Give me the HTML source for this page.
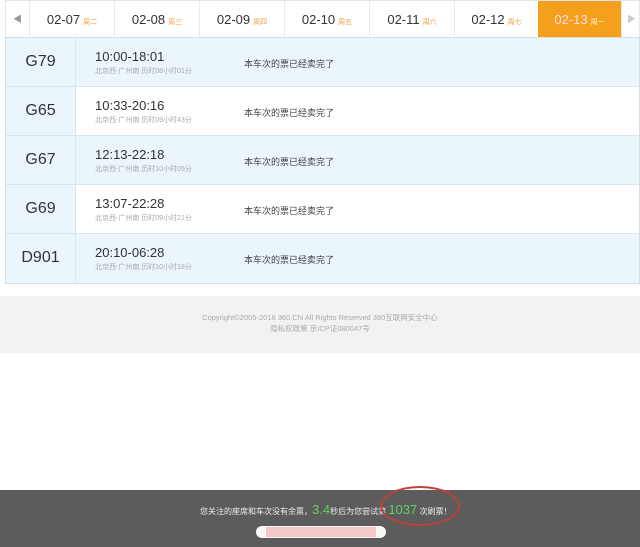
<!DOCTYPE html>
<html><head><meta charset="utf-8"><style>
*{margin:0;padding:0;box-sizing:border-box}
body{width:640px;height:547px;background:#fff;position:relative;overflow:hidden;font-family:"Liberation Sans","Noto Sans CJK SC",sans-serif}
.tabs{position:absolute;left:5px;top:0;width:635px;height:37px;border:1px solid #e3e6ea;border-bottom:none;background:#fff}
.tab{position:absolute;top:0;height:37px;border-left:1px solid #e8eaee;line-height:37px;text-align:center;font-size:13px;color:#333}
.tab small{font-size:7px;color:#f0a040;margin-left:3px}
.tab.on{background:#f5a01a;color:#fde;border:none}
.tab.on small{color:#ffd}
.tbl{position:absolute;left:5px;top:37px;width:635px;height:247px;border:1px solid #d5dde5}
.row{position:absolute;left:0;width:100%;height:49px;border-bottom:1px solid #d8e4ee}
.row.b{background:#eaf5fc}
.row .no{position:absolute;left:0;top:0;width:70px;height:48px;background:#eaf5fc;border-right:1px solid #d8e4ee;text-align:center;line-height:48px;font-size:16px;color:#333}
.row .t{position:absolute;left:89px;top:11px;font-size:13px;color:#333}
.row .s{position:absolute;left:89px;top:28px;font-size:7px;color:#aaa}
.row .m{position:absolute;left:238px;top:19px;font-size:9px;color:#444}
.foot{position:absolute;left:0;top:296px;width:640px;height:57px;background:#f1f2f4;text-align:center;font-size:7.5px;color:#aaa;padding-top:16px;line-height:11px}
.bar{position:absolute;left:0;top:490px;width:640px;height:57px;background:#5c5c5c}
.msg{position:absolute;left:200px;top:12px;font-size:8px;color:#eee;white-space:nowrap}
.msg b{font-weight:normal;color:#5fd35f;font-size:13px}
.ell{position:absolute;left:380px;top:-4px;width:80px;height:40px;border:2px solid #c0403a;border-radius:50%}
.pill{position:absolute;left:256px;top:36px;width:130px;height:12px;background:#f8f8f8;border-radius:6px}
.pill i{position:absolute;left:10px;top:1px;width:110px;height:10px;background:#f3c8c8}
</style></head><body>
<div class="tabs">
<div class="tab" style="left:0;width:23px;border:none;color:#999;font-size:9px">◀</div>
<div class="tab" style="left:23px;width:85px">02-07<small>周二</small></div>
<div class="tab" style="left:108px;width:85px">02-08<small>周三</small></div>
<div class="tab" style="left:193px;width:85px">02-09<small>周四</small></div>
<div class="tab" style="left:278px;width:85px">02-10<small>周五</small></div>
<div class="tab" style="left:363px;width:85px">02-11<small>周六</small></div>
<div class="tab" style="left:448px;width:84px">02-12<small>周七</small></div>
<div class="tab on" style="left:532px;width:83px">02-13<small>周一</small></div>
<div class="tab" style="left:615px;width:20px;color:#ccc;font-size:9px">▶</div>
</div>
<div class="tbl">
<div class="row b" style="top:0"><div class="no">G79</div><div class="t">10:00-18:01</div><div class="s">北京西-广州南 历时08小时01分</div><div class="m">本车次的票已经卖完了</div></div>
<div class="row" style="top:49px"><div class="no">G65</div><div class="t">10:33-20:16</div><div class="s">北京西-广州南 历时09小时43分</div><div class="m">本车次的票已经卖完了</div></div>
<div class="row b" style="top:98px"><div class="no">G67</div><div class="t">12:13-22:18</div><div class="s">北京西-广州南 历时10小时05分</div><div class="m">本车次的票已经卖完了</div></div>
<div class="row" style="top:147px"><div class="no">G69</div><div class="t">13:07-22:28</div><div class="s">北京西-广州南 历时09小时21分</div><div class="m">本车次的票已经卖完了</div></div>
<div class="row b" style="top:196px;border-bottom:none"><div class="no">D901</div><div class="t">20:10-06:28</div><div class="s">北京西-广州南 历时10小时18分</div><div class="m">本车次的票已经卖完了</div></div>
</div>
<div class="foot">Copyright©2005-2018 360.CN All Rights Reserved 360互联网安全中心<br>隐私权政策 京ICP证080047号</div>
<div class="bar">
<div class="msg">您关注的座席和车次没有余票，<b>3.4</b>秒后为您尝试第 <b>1037</b> 次刷票！</div>
<div class="ell"></div>
<div class="pill"><i></i></div>
</div>
</body></html>
